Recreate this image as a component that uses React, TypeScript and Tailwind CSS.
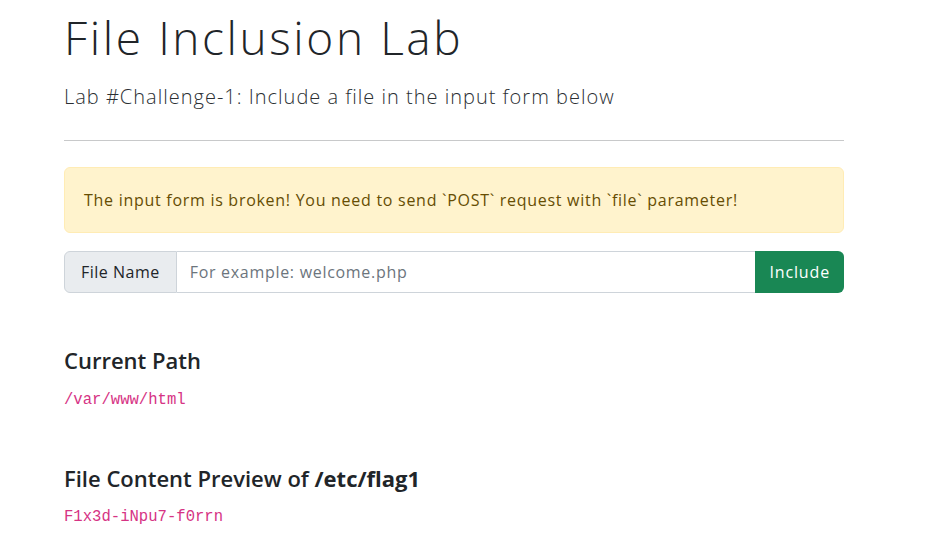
export default function App() {
  return (
    <div className="min-h-[535px] bg-white text-[#212529]" style={{ fontFamily: '"Open Sans", "Noto Sans", sans-serif' }}>
      <div className="w-[844px] pl-[64px] pt-[12px]">
        <h1 className="m-0 text-[46px] leading-[50px] font-light tracking-[2.6px]">File Inclusion Lab</h1>
        <p className="mt-[20px] text-[20px] leading-[30px] font-light tracking-[1px] text-[#2b2f33]">
          Lab #Challenge-1: Include a file in the input form below
        </p>
        <div className="mt-[28px] h-px bg-[#c8c9ca]" />
        <div className="mt-[26px] rounded-[6px] border border-[#ffecb5] bg-[#fff3cd] px-[19px] py-[20px] text-[16px] leading-[24px] tracking-[0.72px] text-[#664d03]">
          The input form is broken! You need to send `POST` request with `file` parameter!
        </div>
        <div className="mt-[18px] flex h-[42px] text-[16px]">
          <div className="flex items-center rounded-l-[6px] border border-[#ced4da] bg-[#e9ecef] px-[16px] tracking-[0.5px] text-[#212529]">
            File Name
          </div>
          <div className="flex flex-1 items-center border-y border-[#ced4da] px-[13px] tracking-[0.7px] text-[#6c757d]">
            For example: welcome.php
          </div>
          <div className="flex items-center rounded-r-[6px] bg-[#198754] px-[14px] tracking-[0.85px] text-white">
            Include
          </div>
        </div>
        <h4 className="mt-[53px] text-[22px] leading-[28px] font-semibold">Current Path</h4>
        <div className="mt-[14px] text-[15.6px] leading-[24px] text-[#d63384]" style={{ fontFamily: '"Liberation Mono", monospace' }}>
          /var/www/html
        </div>
        <h4 className="mt-[52px] text-[22px] leading-[28px] font-semibold">
          File Content Preview of <b className="font-bold">/etc/flag1</b>
        </h4>
        <div className="mt-[13px] text-[15.6px] leading-[24px] text-[#d63384]" style={{ fontFamily: '"Liberation Mono", monospace' }}>
          F1x3d-iNpu7-f0rrn
        </div>
      </div>
    </div>
  );
}
